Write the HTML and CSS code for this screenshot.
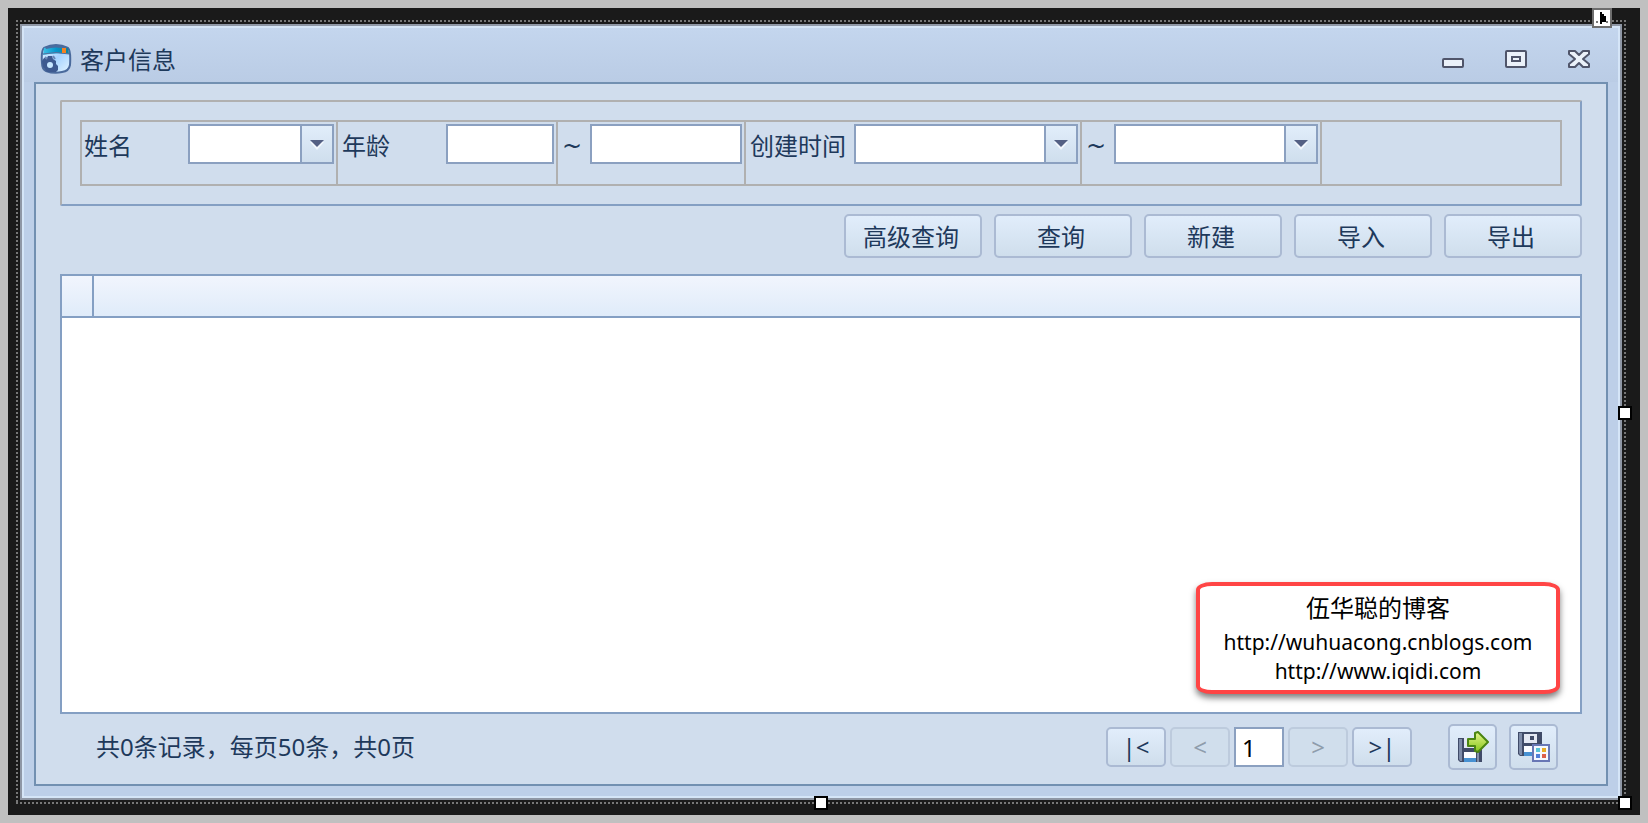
FILE: index.html
```html
<!DOCTYPE html>
<html lang="zh-CN">
  <head>
    <meta charset="UTF-8" />
    <meta name="viewport" content="width=device-width, initial-scale=1.0" />
    <title>客户信息</title>
    <link rel="stylesheet" href="styles.css">
  </head>
  <body>
    <div class="designer">
      <div class="frame">
        <div class="window">
          <header class="titlebar">
            <svg class="app-icon" viewBox="0 0 32 32" aria-hidden="true">
              <defs>
                <linearGradient id="body" x1="0" y1="0" x2="1" y2="1">
                  <stop offset="0" stop-color="#eef7ff" />
                  <stop offset="0.5" stop-color="#a5d3ff" />
                  <stop offset="1" stop-color="#e4f5ff" />
                </linearGradient>
                <linearGradient id="lid" x1="0" y1="0" x2="1" y2="0">
                  <stop offset="0" stop-color="#3fc0e4" />
                  <stop offset="0.5" stop-color="#0596cc" />
                  <stop offset="1" stop-color="#108095" />
                </linearGradient>
              </defs>
              <path d="M4 5Q16-1 28 5Q31 8 30 22Q29 28 22 29Q14 31 6 28Q2 26 2 20Q1 8 4 5Z" fill="url(#body)" stroke="#4a6a9c" stroke-width="2" />
              <path d="M4 5Q16 0 28 5L29 11Q16 9 3 12Z" fill="url(#lid)" />
              <path d="M5 4Q16 0 27 4L26 6Q16 3 6 6Z" fill="#496c9f" />
              <path d="M3 11Q16 8 29 11" stroke="#56719f" fill="none" />
              <rect x="22" y="5" width="4" height="5" fill="#f58220" />
              <path d="M4 15h3l1-2h4l1 3 3 2v3l2 2v4l-2 2H7l-4-5-1-6Z" fill="#3d5a90" />
              <circle cx="10" cy="22" r="3" fill="#c7e7ff" />
              <path d="M5 14l2 2M13 13l2 3" stroke="#6a87b4" stroke-width="2" />
            </svg>
            <h1 class="title">客户信息</h1>
            <div class="window-buttons">
              <button type="button" class="window-button" aria-label="最小化">
                <svg viewBox="0 0 22 18"><rect x="1" y="9" width="20" height="8" rx="1" /></svg>
              </button>
              <button type="button" class="window-button" aria-label="最大化">
                <svg viewBox="0 0 22 18"><rect x="1" y="1" width="20" height="16" rx="1" /><rect x="7" y="7" width="8" height="4" /></svg>
              </button>
              <button type="button" class="window-button" aria-label="关闭">
                <svg viewBox="0 0 22 18"><path d="M1 1H7L11 5L15 1H21V4L15 9L21 14V17H15L11 13L7 17H1V14L7 9L1 4Z" stroke-linejoin="round" /></svg>
              </button>
            </div>
          </header>

          <main class="content">
            <form class="filter">
              <div class="filter-row">
                <div class="cell cell-name">
                  <label for="name">姓名</label>
                  <select id="name" class="field"><option></option></select>
                </div>
                <div class="cell cell-age">
                  <label for="age-from">年龄</label>
                  <input id="age-from" class="field" type="text" />
                </div>
                <div class="cell cell-age-to">
                  <label for="age-to" class="tilde">~</label>
                  <input id="age-to" class="field" type="text" />
                </div>
                <div class="cell cell-date">
                  <label for="date-from">创建时间</label>
                  <div class="field combo">
                    <input id="date-from" type="text" />
                    <button type="button" aria-label="选择开始时间"></button>
                  </div>
                </div>
                <div class="cell cell-date-to">
                  <label for="date-to" class="tilde">~</label>
                  <div class="field combo">
                    <input id="date-to" type="text" />
                    <button type="button" aria-label="选择结束时间"></button>
                  </div>
                </div>
              </div>
            </form>

            <div class="actions">
              <button type="button" class="button">高级查询</button>
              <button type="button" class="button">查询</button>
              <button type="button" class="button">新建</button>
              <button type="button" class="button">导入</button>
              <button type="button" class="button">导出</button>
            </div>

            <div class="grid">
              <table>
                <thead>
                  <tr><th class="indicator"></th><th></th></tr>
                </thead>
              </table>
              <div class="note">
                <p class="note-name">伍华聪的博客</p>
                <a href="http://wuhuacong.cnblogs.com">http://wuhuacong.cnblogs.com</a>
                <a href="http://www.iqidi.com">http://www.iqidi.com</a>
              </div>
            </div>

            <footer class="pager">
              <span class="summary">共0条记录，每页50条，共0页</span>
              <div class="pages">
                <button type="button" class="button" aria-label="首页">|&lt;</button>
                <button type="button" class="button" aria-label="上一页" disabled>&lt;</button>
                <input type="text" class="page" value="1" aria-label="页码" />
                <button type="button" class="button" aria-label="下一页" disabled>&gt;</button>
                <button type="button" class="button" aria-label="末页">&gt;|</button>
              </div>
              <div class="exports">
                <button type="button" class="button" aria-label="导出当前页">
                  <svg viewBox="0 0 32 32">
                    <defs>
                      <linearGradient id="arrow" x1="0" y1="0" x2="0" y2="1">
                        <stop offset="0" stop-color="#e5f68c" />
                        <stop offset="1" stop-color="#86c51b" />
                      </linearGradient>
                    </defs>
                    <path d="M1 7H25V31H3L1 29Z" fill="#404b68" />
                    <path d="M2 8H5V30H3L2 28Z" fill="#7d8ba8" />
                    <rect x="7" y="7" width="13" height="10" fill="#e3e8f3" />
                    <rect x="7" y="21" width="12" height="6" fill="#fbfcff" />
                    <rect x="7" y="27" width="12" height="4" fill="#4791d2" />
                    <rect x="20" y="21" width="2" height="10" fill="#8490a9" />
                    <path d="M11 8H18V2L21 1L31 11L21 21L18 20V15H11Z" fill="url(#arrow)" stroke="#4a8512" stroke-width="2" stroke-linejoin="round" />
                  </svg>
                </button>
                <button type="button" class="button" aria-label="导出全部">
                  <svg viewBox="0 0 32 32">
                    <path d="M0 1H24V25H2L0 23Z" fill="#404b68" />
                    <path d="M1 2H4V24H2L1 22Z" fill="#7d8ba8" />
                    <rect x="6" y="3" width="13" height="9" fill="#e3e8f3" />
                    <rect x="12" y="5" width="4" height="4" fill="#404b68" />
                    <rect x="6" y="15" width="9" height="6" fill="#fbfcff" />
                    <rect x="6" y="21" width="9" height="4" fill="#4791d2" />
                    <rect x="15" y="14" width="16" height="16" fill="#f5f8ff" stroke="#6877b5" stroke-width="2" />
                    <rect x="18" y="17" width="4" height="4" fill="#58c5d8" />
                    <rect x="24" y="17" width="4" height="4" fill="#e8ad27" />
                    <rect x="18" y="23" width="4" height="4" fill="#5280d8" />
                    <rect x="24" y="23" width="4" height="4" fill="#dc604c" />
                  </svg>
                </button>
              </div>
            </footer>
          </main>
        </div>

        <!-- designer selection handles -->
        <button type="button" class="smart-tag" aria-label="任务">
          <svg viewBox="0 0 16 16"><path d="M6 2h2v2h2v2h2v6H8v2H6z" fill="#000" /><path d="M2 11h2v2H2zM12 11h2v2h-2z" fill="#777" /></svg>
        </button>
        <span class="handle handle-right"></span>
        <span class="handle handle-bottom"></span>
        <span class="handle handle-corner"></span>
      </div>
    </div>
  </body>
</html>
```
FILE: styles.css
```css
* {
  box-sizing: border-box;
}
body {
  margin: 0;
  padding: 8px;
  height: 100vh;
  min-height: 600px;
  background-color: #c0c0c0;
  font-family: "Noto Sans", "Noto Sans CJK SC", sans-serif;
  font-size: 24px;
  line-height: 32px;
  color: #1e395b;
}
button,
input,
select {
  font: inherit;
  color: inherit;
  margin: 0;
  padding: 0;
  border: 0;
  border-radius: 0;
}
svg {
  display: block;
}

/* designer surface */
.designer {
  height: 100%;
  padding: 12px 14px 11px 8px;
  background-color: #1a1a1a;
}
.frame {
  position: relative;
  height: 100%;
  padding: 4px;
  background:
    repeating-linear-gradient(90deg, #777 0 2px, transparent 2px 4px) top / 100% 2px no-repeat,
    repeating-linear-gradient(90deg, #777 0 2px, transparent 2px 4px) bottom / 100% 2px no-repeat,
    repeating-linear-gradient(#777 0 2px, transparent 2px 4px) left / 2px 100% no-repeat,
    repeating-linear-gradient(#777 0 2px, transparent 2px 4px) right / 2px 100% no-repeat;
}
.handle {
  position: absolute;
  width: 14px;
  height: 14px;
  border: 2px solid #000;
  background-color: #fff;
}
.handle-right {
  right: -6px;
  top: calc(50% - 6px);
}
.handle-bottom {
  left: calc(50% - 7px);
  bottom: -6px;
}
.handle-corner {
  right: -6px;
  bottom: -6px;
}
.smart-tag {
  position: absolute;
  top: -12px;
  right: 14px;
  width: 20px;
  height: 20px;
  border: 2px solid #6e6e6e;
  background-color: #fff;
}

/* window */
.window {
  display: flex;
  flex-direction: column;
  height: 100%;
  padding: 0 12px 12px;
  border: 2px solid #8f97a5;
  box-shadow: inset 0 0 0 2px #d5e5f7;
  background: linear-gradient(#c4d6ee, #bacce5 56px, #bdcfe8 56px);
}
.titlebar {
  display: flex;
  align-items: center;
  height: 56px;
  padding: 10px 18px 0 6px;
}
.app-icon {
  width: 32px;
  height: 32px;
  margin-right: 8px;
}
.title {
  flex: 1;
  margin: 0;
  padding-top: 2px;
  font-size: 24px;
  font-weight: normal;
  line-height: 32px;
}
.window-buttons {
  display: flex;
  gap: 41px;
}
.window-button {
  width: 22px;
  height: 18px;
  background: none;
}
.window-button svg {
  fill: #ebf1f9;
  stroke: #50556a;
  stroke-width: 2;
}
.content {
  flex: 1;
  display: flex;
  flex-direction: column;
  min-height: 0;
  padding: 16px 24px 0;
  border: 2px solid #7290b1;
  background-color: #d0dded;
}

/* search conditions */
.filter {
  padding: 18px;
  border: 2px solid #849fc3;
  border-top-color: #b0b0b0;
  border-left-color: #b0b0b0;
  border-radius: 2px;
}
.filter-row {
  display: flex;
  height: 66px;
  border: 2px solid #b0b0b0;
}
.cell {
  display: flex;
  justify-content: space-between;
  padding: 2px 2px 0;
  border-right: 2px solid #b0b0b0;
}
.cell label {
  padding-top: 6px;
}
.cell-name {
  width: 256px;
}
.cell-age {
  width: 220px;
}
.cell-age-to {
  width: 188px;
}
.cell-date {
  width: 336px;
}
.cell-date-to {
  width: 240px;
}
.cell-age label,
.cell-age-to label,
.cell-date label,
.cell-date-to label {
  padding-left: 2px;
}
.cell .tilde {
  font-family: "DejaVu Sans", sans-serif;
}
.field {
  height: 40px;
  border: 2px solid #8ba0c0;
  background-color: #fff;
}
.cell-name .field {
  width: 146px;
  appearance: none;
  background:
    url("data:image/svg+xml,%3Csvg xmlns='http://www.w3.org/2000/svg' width='14' height='10'%3E%3Cpath d='M0 2h14l-7 8z' fill='%23f2f7fd'/%3E%3Cpath d='M0 0h14L7 7z' fill='%23546084'/%3E%3C/svg%3E") right 8px top 14px no-repeat,
    linear-gradient(#e1edfa, #cfdeed) right / 30px 100% no-repeat,
    linear-gradient(#8ba0c0, #8ba0c0) right 30px top / 2px 100% no-repeat,
    #fff;
}
.cell-age .field {
  width: 108px;
}
.cell-age-to .field {
  width: 152px;
}
.combo {
  display: flex;
}
.combo input {
  flex: 1;
  min-width: 0;
}
.combo button {
  width: 32px;
  border-left: 2px solid #8ba0c0;
  background:
    url("data:image/svg+xml,%3Csvg xmlns='http://www.w3.org/2000/svg' width='14' height='10'%3E%3Cpath d='M0 2h14l-7 8z' fill='%23f2f7fd'/%3E%3Cpath d='M0 0h14L7 7z' fill='%23546084'/%3E%3C/svg%3E") right 8px top 14px no-repeat,
    linear-gradient(#e1edfa, #cfdeed);
}
.cell-date .field {
  width: 224px;
}
.cell-date-to .field {
  width: 204px;
}

/* buttons */
.button {
  display: flex;
  align-items: center;
  justify-content: center;
  border: 2px solid #abbad3;
  border-radius: 5px;
  background: linear-gradient(#e1edfb, #cfdeec);
}
.button:disabled {
  color: #8e9cab;
  border-color: #bdcbdd;
  background: #d0deec;
}
.actions {
  display: flex;
  justify-content: flex-end;
  gap: 12px;
  padding: 8px 0 16px;
}
.actions .button {
  width: 138px;
  height: 44px;
  padding: 2px 4px 0 0;
}

/* records */
.grid {
  position: relative;
  flex: 1;
  border: 2px solid #849fc3;
  background-color: #fff;
}
table {
  width: 100%;
  border-collapse: collapse;
  table-layout: fixed;
}
thead {
  background: linear-gradient(#f1f5fd, #dfebf9);
}
th {
  height: 41px;
  padding: 0;
  border-bottom: 2px solid #849fc3;
}
.indicator {
  width: 31px;
  border-right: 2px solid #849fc3;
}
.note {
  position: absolute;
  right: 20px;
  bottom: 18px;
  width: 364px;
  height: 112px;
  padding-top: 6px;
  border: 4px solid #ff4545;
  border-radius: 16px / 8px;
  background-color: #fff;
  box-shadow: 0 4px 6px rgba(0, 0, 0, 0.5);
  color: #000;
  text-align: center;
}
.note-name {
  margin: 0 0 4px;
}
.note a {
  display: block;
  font-size: 21px;
  line-height: 29px;
  color: inherit;
  text-decoration: none;
}

/* paging */
.pager {
  display: flex;
  align-items: center;
  padding: 10px 24px 14px 36px;
}
.summary {
  flex: 1;
}
.pages {
  display: flex;
  gap: 4px;
  margin-right: 36px;
}
.pages .button {
  width: 60px;
  height: 40px;
}
.page {
  width: 50px;
  height: 40px;
  padding-left: 6px;
  border: 2px solid #8ba0c0;
  background-color: #fff;
  color: #000;
}
.exports {
  display: flex;
  gap: 12px;
}
.exports .button {
  width: 49px;
  height: 46px;
}
.exports svg {
  width: 32px;
  height: 32px;
}
```
